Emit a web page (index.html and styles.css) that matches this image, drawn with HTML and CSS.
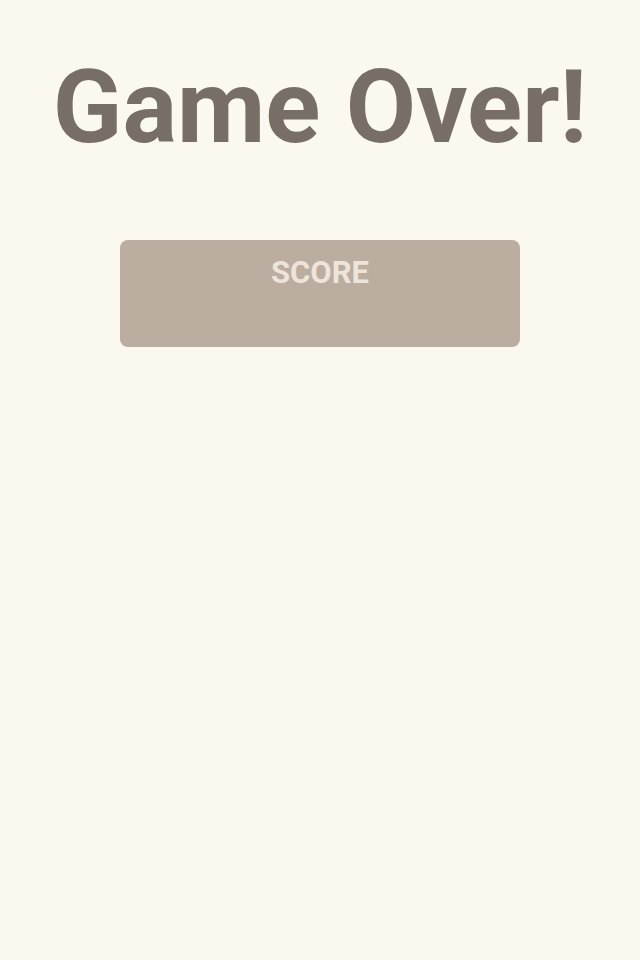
FILE: index.html
```html
<!DOCTYPE html>
<html>
<head>
<meta charset="utf-8">
<link rel="stylesheet" href="styles.css">
</head>
<body>
<main class="screen">
  <h1 class="title">Game Over!</h1>
  <div class="score-box">
    <div class="score-label">SCORE</div>
    <div class="score-value"></div>
  </div>
</main>
</body>
</html>
```
FILE: styles.css
```css
html, body {
  margin: 0;
  padding: 0;
  background: #faf8ef;
}
.screen {
  width: 640px;
  height: 960px;
  display: flex;
  flex-direction: column;
  align-items: center;
  font-family: Roboto, "Noto Sans", sans-serif;
}
.title {
  margin: 47px 0 0;
  font-size: 102px;
  font-weight: bold;
  line-height: 120px;
  color: #776e65;
}
.score-box {
  margin-top: 73px;
  width: 400px;
  height: 107px;
  background: #bbada0;
  border-radius: 8px;
  display: flex;
  flex-direction: column;
  align-items: center;
}
.score-label {
  margin-top: 15px;
  font-size: 31px;
  line-height: 36px;
  font-weight: bold;
  color: #eee4da;
}
```
